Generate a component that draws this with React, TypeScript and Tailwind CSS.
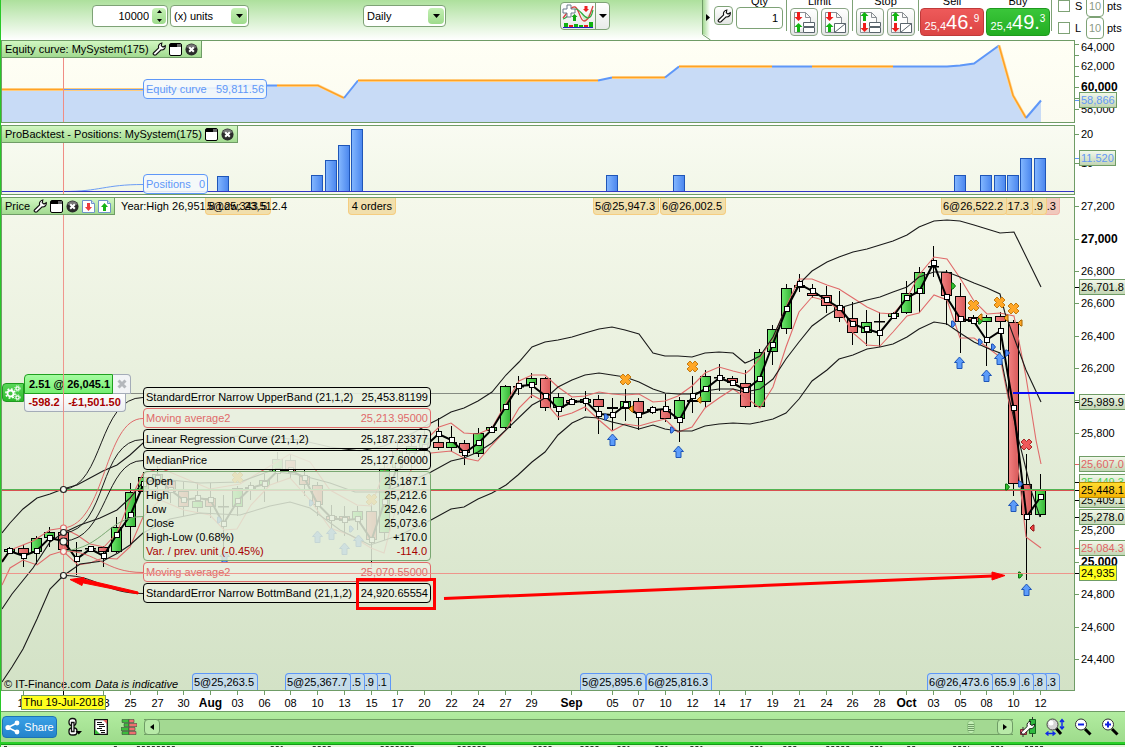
import type { ReactNode } from "react";

type Frame = { x: number; y: number; w: number; h: number };
type Dir = "up" | "down";
type Candle = [
  high: number,
  top: number,
  bottom: number,
  low: number,
  dir: Dir,
  median: number,
];
type AxisTick = { y: number; label?: string; bold?: boolean; bare?: boolean };
type AxisTag = { y: number; label: string; tone: keyof typeof TAG_TONES };
type OrderTag = { x: number; w: number; label: string; tone?: "loss" };

const EQUITY: Frame = { x: 2, y: 41, w: 1072, h: 81 };
const POSITIONS: Frame = { x: 2, y: 126, w: 1072, h: 68 };
const PRICE: Frame = { x: 2, y: 198, w: 1072, h: 492 };

const CURSOR_X = 63.5;

const barX = (i: number) => Math.floor(9.8 + 13.384 * i) + 0.5;
const left = (f: Frame, x: number) => `${((x - f.x) / f.w) * 100}%`;
const top = (f: Frame, y: number) => `${((y - f.y) / f.h) * 100}%`;
const viewBox = (f: Frame) => `${f.x} ${f.y} ${f.w} ${f.h}`;

// the axis column spans the panel's borders too
const axisTop = (f: Frame, y: number) => `${((y + 1 - f.y) / (f.h + 2)) * 100}%`;

const TAG_TONES = {
  black: "bg-linear-to-b from-[#f2f8ea] to-[#c3d5b4] border-[#6f9c66] text-black",
  red: "bg-linear-to-b from-[#f2f8ea] to-[#c3d5b4] border-[#6f9c66] text-[#e06464]",
  green:
    "bg-linear-to-b from-[#f2f8ea] to-[#c3d5b4] border-[#6f9c66] text-[#4fd04f]",
  blue: "bg-linear-to-b from-[#f2f8ea] to-[#c3d5b4] border-[#6f9c66] text-[#6398f5]",
  last: "bg-linear-to-b from-[#ffdc2e] to-[#f5b400] border-[#b88a00] text-black",
  cursor: "bg-[#ffff1e] border-[#6f9c66] text-black",
};

const CANDLES: Candle[] = [
  [547, 549, 552, 554, "up", 551],
  [545, 548, 554, 567, "down", 556],
  [536, 538, 552, 564, "up", 551],
  [527, 532, 538, 547, "up", 538],
  [528, 532, 550, 555, "down", 541],
  [542, 550, 551, 575, "up", 559],
  [547, 548, 549, 551, "up", 549],
  [546, 547, 552, 567, "down", 556],
  [517, 527, 552, 553, "up", 535],
  [483, 492, 527, 544, "up", 515],
  [472, 477, 492, 500, "up", 484],
  [466, 474, 482, 495, "up", 478],
  [478, 481, 492, 503, "down", 490],
  [482, 491, 507, 516, "down", 500],
  [483, 501, 508, 512, "up", 498],
  [483, 498, 507, 518, "down", 500],
  [495, 506, 507, 560, "down", 524],
  [486, 488, 507, 516, "up", 501],
  [482, 487, 489, 500, "up", 488],
  [474, 480, 486, 502, "up", 484],
  [452, 459, 472, 482, "up", 471],
  [454, 460, 472, 478, "down", 470],
  [470, 476, 485, 496, "down", 478],
  [482, 485, 505, 516, "down", 504],
  [505, 516, 520, 530, "down", 518],
  [506, 516, 521, 536, "down", 520],
  [506, 511, 520, 530, "up", 519],
  [505, 511, 540, 567, "down", 540],
  [462, 468, 533, 540, "up", 502],
  [440, 450, 468, 480, "up", 466],
  [436, 446, 454, 470, "up", 455],
  [430, 438, 448, 460, "up", 447],
  [418, 442, 448, 450, "down", 434],
  [426, 442, 448, 452, "up", 440],
  [440, 443, 453, 465, "down", 453],
  [428, 433, 454, 457, "up", 443],
  [426, 427, 431, 433, "up", 430],
  [385, 386, 428, 429, "up", 407],
  [376, 386, 387, 395, "up", 386],
  [373, 378, 385, 398, "up", 385],
  [377, 378, 408, 411, "down", 396],
  [393, 397, 408, 420, "up", 409],
  [398, 400, 403, 405, "down", 402],
  [391, 399, 403, 411, "up", 401],
  [395, 399, 407, 434, "down", 414],
  [398, 407, 409, 430, "down", 415],
  [389, 401, 409, 421, "up", 405],
  [398, 401, 413, 430, "down", 415],
  [406, 409, 411, 414, "up", 410],
  [394, 409, 419, 422, "down", 409],
  [397, 400, 419, 442, "up", 420],
  [376, 400, 402, 413, "down", 396],
  [370, 376, 402, 407, "up", 389],
  [364, 377, 378, 391, "up", 378],
  [376, 378, 383, 386, "down", 383],
  [370, 383, 407, 408, "down", 390],
  [349, 352, 407, 408, "up", 379],
  [325, 329, 352, 365, "up", 345],
  [284, 288, 329, 334, "up", 309],
  [274, 285, 288, 292, "up", 284],
  [284, 293, 296, 298, "down", 291],
  [286, 295, 306, 313, "down", 300],
  [291, 307, 318, 322, "down", 308],
  [302, 318, 333, 345, "down", 324],
  [310, 322, 333, 346, "up", 329],
  [312, 321, 322, 347, "up", 333],
  [312, 313, 317, 318, "up", 316],
  [281, 293, 313, 314, "up", 298],
  [267, 272, 294, 313, "up", 291],
  [246, 266, 267, 277, "up", 263],
  [270, 272, 296, 325, "down", 297],
  [283, 296, 322, 353, "down", 319],
  [315, 317, 322, 324, "down", 321],
  [315, 317, 322, 366, "up", 340],
  [312, 316, 322, 350, "down", 331],
  [320, 322, 484, 496, "down", 408],
  [454, 484, 515, 580, "down", 517],
  [474, 490, 515, 517, "up", 497],
];

const UPPER_BAND =
  "2,533 10,523 23,509 37,498 50,494 63,489 77,485 90,478 103,471 117,465 130,455 143,443 160,440 184,437 210,438 240,436 270,437 300,440 330,447 360,451 384,446 411,434 431,423 439,419 451,412 464,408 478,401 492,392 506,375 519,362 532,347 545,342 558,340 572,337 585,333 599,329 612,327 625,330 639,334 653,353 665,356 678,356 692,357 705,353 719,352 733,353 745,363 750,361 760,356 773,337 786,308 799,284 812,271 827,262 839,257 853,252 867,249 880,245 893,241 907,235 919,227 934,221 947,220 960,221 974,225 987,229 1000,233 1014,232 1041,287";
const MID_BAND =
  "2,609 12,594 33,568 50,542 63,533 80,525 100,518 117,510 130,498 143,482 170,480 200,483 240,482 270,471 300,475 330,483 355,492 384,492 411,481 431,472 451,461 464,458 478,452 492,443 508,428 532,405 547,397 558,387 572,380 585,375 599,373 612,375 625,377 639,382 653,389 665,393 678,394 692,394 705,391 719,389 733,389 745,392 760,389 773,379 786,359 799,342 812,326 827,315 839,308 853,304 867,300 880,297 893,292 907,287 919,277 934,272 947,272 960,277 974,283 987,288 1000,294 1005,313 1026,370 1041,402";
const LOWER_BAND =
  "2,682 12,667 23,649 37,619 50,589 63,576 80,564 103,561 118,553 130,545 143,533 170,519 200,513 240,515 270,506 290,502 310,508 340,530 370,545 400,535 431,520 451,509 464,507 478,499 492,493 506,485 518,475 532,462 545,452 558,435 572,423 585,417 599,418 612,422 625,425 639,429 653,425 665,429 678,431 692,431 705,426 719,424 733,423 750,424 760,422 773,419 786,413 799,399 812,381 827,370 839,359 853,355 867,349 880,347 893,344 907,337 919,329 934,322 947,324 960,333 974,342 987,348 1000,353 1008,393 1018,437 1032,493 1040,517";
const UPPER_MA =
  "2,560 13,549 33,541 50,530 63,528 77,535 90,544 104,547 117,533 130,500 143,474 160,468 184,478 210,489 240,484 270,466 290,454 310,462 330,490 357,505 371,506 384,472 398,448 411,440 431,435 439,427 451,423 464,433 478,434 492,428 506,403 519,381 532,375 545,375 558,387 572,397 585,396 599,392 612,394 625,395 639,394 653,402 665,401 678,396 692,386 705,373 719,367 733,371 745,374 750,370 760,358 773,338 786,307 799,279 812,279 827,285 839,289 853,298 867,307 880,313 893,314 907,298 919,275 934,257 947,259 960,278 974,301 987,314 1000,313 1014,316 1026,377 1036,440 1041,464";
const LOWER_MA =
  "2,585 10,568 23,560 37,565 50,555 63,551 78,565 90,563 103,558 117,559 130,547 143,517 160,500 184,510 210,515 224,530 237,529 251,505 270,485 290,478 310,500 330,528 350,535 371,548 384,553 398,500 411,470 431,453 451,451 464,458 478,461 492,445 506,430 519,408 532,395 545,402 558,417 572,413 585,407 599,420 612,431 625,424 639,426 653,422 665,419 678,432 692,427 705,408 719,398 733,389 745,397 760,408 773,387 786,347 799,312 812,297 827,301 839,310 853,333 867,345 880,346 893,332 907,316 919,313 934,295 947,300 960,338 974,338 987,347 1000,357 1013,423 1026,537 1041,548";

const BUY_ARROWS = [
  [224, 557],
  [317, 537],
  [331, 534],
  [344, 549],
  [358, 541],
  [612, 440],
  [678, 452],
  [959, 363],
  [986, 376],
  [999, 359],
  [1013, 506],
  [1026, 590],
];
const CLOSE_CROSSES: [number, number, string, string][] = [
  [237, 477, "#ffa726", "#c47a10"],
  [371, 499, "#ffa726", "#c47a10"],
  [625, 379, "#ffa726", "#c47a10"],
  [692, 366, "#ffa726", "#c47a10"],
  [973, 305, "#ffa726", "#c47a10"],
  [999, 302, "#ffa726", "#c47a10"],
  [1013, 308, "#ffa726", "#c47a10"],
  [1026, 444, "#f05a5a", "#a82828"],
];
const RIGHT_FILLS: [number, number, string, string][] = [
  [219, 520, "#4f8ff5", "#1f4fb4"],
  [311, 503, "#4f8ff5", "#1f4fb4"],
  [351, 529, "#4f8ff5", "#1f4fb4"],
  [606, 417, "#4f8ff5", "#1f4fb4"],
  [672, 430, "#4f8ff5", "#1f4fb4"],
  [953, 324, "#4f8ff5", "#1f4fb4"],
  [980, 342, "#4f8ff5", "#1f4fb4"],
  [993, 347, "#4f8ff5", "#1f4fb4"],
  [1007, 353, "#4f8ff5", "#1f4fb4"],
  [1020, 484, "#4f8ff5", "#1f4fb4"],
  [953, 286, "#2fc02f", "#0b700b"],
  [980, 321, "#2fc02f", "#0b700b"],
  [1007, 487, "#2fc02f", "#0b700b"],
  [1020, 575, "#2fc02f", "#0b700b"],
];
const LEFT_FILLS: [number, number, string, string][] = [
  [631, 409, "#ffa726", "#a86400"],
  [699, 400, "#ffa726", "#a86400"],
  [980, 317, "#ffa726", "#a86400"],
  [1006, 318, "#ffa726", "#a86400"],
  [1020, 323, "#ffa726", "#a86400"],
  [1032, 528, "#f04040", "#901818"],
];

const EQUITY_SEGMENTS: [string, boolean][] = [
  ["2,89.5 144,89.5", true],
  ["144,89.5 215,88 230,85.5 277,85.5", false],
  ["277,85.5 318,85.5 344,98", true],
  ["344,98 358,80.5", false],
  ["358,80.5 598,80.5", true],
  ["598,80.5 612,77.5", false],
  ["612,77.5 665,77.5", true],
  ["665,77.5 679,66.5", false],
  ["679,66.5 772,66.5", true],
  ["772,66.5 812,66.5", false],
  ["812,66.5 893,66.5", true],
  ["893,66.5 947,66.5 960,65.5 974,63.5 999,45.5", false],
  ["999,45.5 1013,95.5 1026,118", true],
  ["1026,118 1041,100.5", false],
];

const POSITION_BARS: [number, number][] = [
  [16, 176],
  [23, 175],
  [24, 160],
  [25, 145],
  [26, 129],
  [45, 175],
  [50, 175],
  [71, 175],
  [73, 175],
  [74, 175],
  [75, 175],
  [76, 158],
  [77, 158],
];

const DATE_LABELS: [number, string][] = [
  [1, "18"], [7, "23"], [9, "25"], [11, "27"], [13, "30"], [15, "Aug"],
  [17, "03"], [19, "06"], [21, "08"], [23, "10"], [25, "13"], [27, "15"],
  [29, "17"], [31, "20"], [33, "22"], [35, "24"], [37, "27"], [39, "29"],
  [42, "Sep"], [45, "05"], [47, "07"], [49, "10"], [51, "12"], [53, "14"],
  [55, "17"], [57, "19"], [59, "21"], [61, "24"], [63, "26"], [65, "28"],
  [67, "Oct"], [69, "03"], [71, "05"], [73, "08"], [75, "10"], [77, "12"],
];

const EQUITY_TICKS: AxisTick[] = [
  { y: 44 },
  { y: 47, label: "64,000", bare: true },
  { y: 55 },
  { y: 66, label: "62,000" },
  { y: 76 },
  { y: 87, label: "60,000", bold: true },
  { y: 98 },
  { y: 109, label: "58,000" },
];
const POSITION_TICKS: AxisTick[] = [
  { y: 134, label: "20" },
  { y: 163, label: "10" },
];
const PRICE_TICKS: AxisTick[] = [
  { y: 206, label: "27,200" },
  { y: 239, label: "27,000", bold: true },
  { y: 271, label: "26,800" },
  { y: 303, label: "26,600" },
  { y: 336, label: "26,400" },
  { y: 368, label: "26,200" },
  { y: 400 },
  { y: 433, label: "25,800" },
  { y: 530, label: "25,200" },
  { y: 562, label: "25,000", bold: true },
  { y: 594, label: "24,800" },
  { y: 627, label: "24,600" },
  { y: 659, label: "24,400" },
];
const PRICE_TAGS: AxisTag[] = [
  { y: 287, label: "26,701.8", tone: "black" },
  { y: 402, label: "25,989.9", tone: "black" },
  { y: 464, label: "25,607.0", tone: "red" },
  { y: 482, label: "25,449.3", tone: "green" },
  { y: 500, label: "25,409.1", tone: "black" },
  { y: 517, label: "25,278.0", tone: "black" },
  { y: 490, label: "25,448.1", tone: "last" },
  { y: 548, label: "25,084.3", tone: "red" },
  { y: 573, label: "24,935", tone: "cursor" },
];

const EXIT_TAGS: OrderTag[] = [
  { x: 205, w: 66, label: "5@25,343.5" },
  { x: 348, w: 48, label: "4 orders" },
  { x: 593, w: 66, label: "5@25,947.3" },
  { x: 660, w: 66, label: "6@26,002.5" },
  { x: 1043, w: 17, label: ".3", tone: "loss" },
  { x: 1030, w: 17, label: ".9" },
  { x: 1004, w: 29, label: "17.3" },
  { x: 941, w: 66, label: "6@26,522.2" },
];
const ENTRY_TAGS: OrderTag[] = [
  { x: 192, w: 66, label: "5@25,263.5" },
  { x: 374, w: 17, label: ".1" },
  { x: 361, w: 17, label: ".9" },
  { x: 348, w: 17, label: ".5" },
  { x: 285, w: 66, label: "5@25,367.7" },
  { x: 580, w: 66, label: "5@25,895.6" },
  { x: 646, w: 66, label: "6@25,816.3" },
  { x: 1043, w: 17, label: ".3" },
  { x: 1030, w: 17, label: ".8" },
  { x: 1017, w: 17, label: ".6" },
  { x: 990, w: 30, label: "65.9" },
  { x: 927, w: 66, label: "6@26,473.6" },
];

const READINGS = [
  ["Open", "25,187.1"],
  ["High", "25,212.6"],
  ["Low", "25,042.6"],
  ["Close", "25,073.6"],
  ["High-Low (0.68%)", "+170.0"],
  ["Var. / prev. unit (-0.45%)", "-114.0"],
];

const WRENCH =
  "M1.6 12.6 7.6 6.8C6.8 4 8.4 1.6 11.2 1.2L10.6 4.4l2 1.4 2.6-1.6c.4 3.2-2 5.4-4.8 4.8L4.6 14.6c-1.8 1-4-.4-3-2z";

const WrenchIcon = () => (
  <svg viewBox="0 0 16 16" className="size-[14px]">
    <path d={WRENCH} fill="#fff" stroke="#111" strokeWidth="1.3" />
  </svg>
);

const WindowIcon = () => (
  <svg viewBox="0 0 13 13" className="size-[13px]">
    <rect x="0.5" y="0.5" width="12" height="12" rx="1.5" fill="#fff" stroke="#000" />
    <path d="M1 1h11v3H1z" fill="#000" />
    <path d="M8 1h4v3H8z" fill="#666" />
  </svg>
);

const CloseIcon = () => (
  <svg viewBox="0 0 14 14" className="size-[13px]">
    <circle cx="7" cy="7" r="6.500" fill="#2b2b2b" />
    <path d="M1.500 5A6 6 0 0 1 12.500 5z" fill="#777" />
    <path d="m4.500 4.500 5 5m0-5-5 5" stroke="#fff" strokeWidth="2.200" />
  </svg>
);

const PageArrowIcon = ({ up }: { up?: boolean }) => (
  <svg viewBox="0 0 13 13" className="size-[13px]">
    <path d="M.5.5h9l3 3v9H.5z" fill="#fff" stroke="#6f94c8" />
    <path d="M9.500.5v3h3" fill="#cfe0f5" stroke="#6f94c8" />
    <path
      d={up ? "m6.500 3 3.500 4H8v4H5V7H3z" : "m6.500 11 3.500-4H8V3H5v4H3z"}
      fill={up ? "#16b416" : "#ee3a3a"}
    />
  </svg>
);

const OrderIcon = ({ stop, slash }: { stop?: boolean; slash?: boolean }) => (
  <svg viewBox="0 0 24 24" className="size-6">
    <path d="M2.500 22.500v-20h11l5 5v6M13.500 2.500v5h5" fill="#fdfdfd" stroke="#8a8f94" />
    <path d="M2.500 22.500h9" stroke="#8a8f94" />
    {slash ? (
      <path d="M11.500 13.500h11v9h-11zm0 9 11-9" fill="#fff" stroke="#59646c" />
    ) : (
      <path d="M11.500 12.500h11v4h-11zm0 5h11v5h-11z" fill="#fff" stroke="#59646c" />
    )}
    <g fill={stop ? "#12b412" : "#ee1c1c"}>
      <path d={stop ? "m6.500 2 4 4H8v5H5V6H2.500z" : "m6.500 11 4-4H8V2H5v5H2.500z"} />
    </g>
    <g fill={stop ? "#ee1c1c" : "#12b412"}>
      <path d={stop ? "m6.500 22 4-4H8v-5H5v5H2.500z" : "m6.500 13 4 4H8v5H5v-5H2.500z"} />
    </g>
  </svg>
);

const IndicatorIcon = () => (
  <svg viewBox="0 0 32 24" className="h-6 w-8">
    <path d="M15 6c4 0 5 8 8 11 4-1 6-6 8-13-3 4-5 9-8 8S19 6 15 6z" fill="#cdeec8" />
    <path
      d="M1 14C6 8 9 2 13 3s5 14 9 14 6-6 9-15"
      fill="none"
      stroke="#d84040"
      strokeWidth="1.300"
    />
    <path
      d="M1 15C6 14 10 5 14 5s8 9 12 9 4-5 5-8"
      fill="none"
      stroke="#2aa83a"
      strokeWidth="1.200"
    />
    <path d="M5 1h4v4h4v4H9v4H5V9H1V5h4z" fill="#fff" stroke="#6a7a8c" />
    <path d="m24 8 3-3h-1.500V2h-3v3H21z" fill="#ee2020" />
    <path d="m12.500 10 3 3H14v4h-3v-4H9.500z" fill="#12a812" />
    <path d="M2 19h4v4H2zM12 20h4v3h-4zM17 21h4v2h-4zM27 18h4v5h-4z" fill="#10b010" />
    <path d="M7 21h4v2H7zM22 21h4v2h-4z" fill="#e02020" />
    <path d="M1 23.500h30" stroke="#2020c0" />
  </svg>
);

const GearsIcon = () => (
  <svg viewBox="0 0 16 16" className="size-4" fill="none" stroke="#fff">
    <circle cx="5.500" cy="8.500" r="3" strokeWidth="1.800" />
    <circle cx="5.500" cy="8.500" r="4.600" strokeWidth="1.600" strokeDasharray="1.800 1.800" />
    <circle cx="12.500" cy="3.500" r="1.600" strokeWidth="1.200" />
    <circle cx="12.500" cy="3.500" r="2.700" strokeDasharray="1.100 1.100" />
    <circle cx="12.500" cy="12.500" r="1.600" strokeWidth="1.200" />
    <circle cx="12.500" cy="12.500" r="2.700" strokeDasharray="1.100 1.100" />
  </svg>
);

const Magnifier = ({ sign }: { sign: "+" | "-" }) => (
  <svg viewBox="0 0 18 18" className="size-[18px]">
    <path d="m11 11 5.500 5.500" stroke="#000" strokeWidth="3" />
    <circle cx="7" cy="6.500" r="5.500" fill="#fff" stroke="#333" />
    <path
      d={sign === "+" ? "M4 6.500h6M7 3.500v6" : "M4 6.500h6"}
      stroke="#1020e0"
      strokeWidth="2"
    />
  </svg>
);

const ToolButton = ({ label, children }: { label: string; children: ReactNode }) => (
  <button
    type="button"
    aria-label={label}
    className="flex size-7 shrink-0 items-center justify-center rounded border border-[#8aa585] bg-linear-to-b from-white to-[#e4e6e4]"
  >
    {children}
  </button>
);

const DropDown = ({
  label,
  value,
  className,
}: {
  label: string;
  value: string;
  className: string;
}) => (
  <label className={`relative block h-[22px] shrink-0 ${className}`}>
    <select
      aria-label={label}
      className="block size-full appearance-none rounded border border-[#7ea276] bg-white pl-[3px] text-[11px]"
    >
      <option>{value}</option>
    </select>
    <span className="pointer-events-none absolute inset-y-[3px] right-[2px] flex w-4 items-center justify-center rounded-sm bg-linear-to-b from-[#c4f0b4] to-[#9edb8c]">
      <svg viewBox="0 0 7 4" className="h-1 w-[7px]">
        <path d="M0 0h7L3.500 4z" />
      </svg>
    </span>
  </label>
);

const Separator = () => <div className="h-[31px] w-px shrink-0 bg-[#7ea276]" />;

const OrderGroup = ({ name, stop }: { name: string; stop?: boolean }) => (
  <div className="w-[65px] shrink-0">
    <div className="-mt-[5px] mb-px text-center text-[11px] leading-3">{name}</div>
    <div className="flex justify-center gap-[3px]">
      <ToolButton label={`${name} order`}>
        <OrderIcon stop={stop} />
      </ToolButton>
      <ToolButton label={`${name} order at price`}>
        <OrderIcon stop={stop} slash />
      </ToolButton>
    </div>
  </div>
);

const QuoteButton = ({
  name,
  big,
  small,
  className,
}: {
  name: string;
  big: string;
  small: string;
  className: string;
}) => (
  <div className="w-[66px] shrink-0">
    <div className="-mt-[5px] mb-px text-center text-[11px] leading-3">{name}</div>
    <button
      type="button"
      aria-label={name}
      className={`mx-auto flex h-7 w-16 items-end justify-center rounded border pb-[3px] leading-none text-white ${className}`}
    >
      <span className="text-[11px] leading-3">25,4</span>
      <span className="text-[20px] leading-5">{big}.</span>
      <span className="self-start pt-1 text-[10px] leading-3">{small}</span>
    </button>
  </div>
);

const StopLimitRow = ({ name }: { name: string }) => (
  <div className="flex h-[22px] items-center gap-1">
    <label className="flex items-center gap-[5px]">
      <input
        type="checkbox"
        className="size-3 appearance-none border border-[#7ea276] bg-white"
      />
      <span className="w-[7px]">{name}</span>
    </label>
    <input
      aria-label={`${name} distance`}
      defaultValue="10"
      className="h-[22px] w-[18px] rounded border border-[#7ea276] bg-white text-center text-[11px] text-[#8a9a86]"
    />
    <span className="-ml-px">pts</span>
  </div>
);

const TopToolbar = () => (
  <header className="flex h-10 shrink-0 items-start overflow-hidden bg-linear-to-b from-[#ade09c] to-white pl-[91px]">
    <div className="relative mt-[5px] mr-0.5 h-[22px] w-[76px] shrink-0">
      <input
        aria-label="Units in history"
        defaultValue="10000"
        className="block size-full rounded border border-[#7ea276] bg-white pr-[18px] text-right text-[11px]"
      />
      <span className="absolute inset-y-[3px] right-[2px] flex w-[14px] flex-col items-center justify-between rounded-sm bg-linear-to-b from-[#c4f0b4] to-[#9edb8c] py-[2px]">
        <svg viewBox="0 0 5 3" className="h-[3px] w-[5px]">
          <path d="M0 3h5L2.500 0z" />
        </svg>
        <svg viewBox="0 0 5 3" className="h-[3px] w-[5px]">
          <path d="M0 0h5L2.500 3z" />
        </svg>
      </span>
    </div>
    <div className="mt-[5px] shrink-0">
      <DropDown label="Range" value="(x) units" className="w-[79px]" />
    </div>
    <div className="mt-[5px] ml-[114px] shrink-0">
      <DropDown label="Timeframe" value="Daily" className="w-[83px]" />
    </div>
    <div className="mt-[2px] ml-[114px] flex h-7 w-[50px] shrink-0 rounded border border-[#7ea276] bg-linear-to-b from-white to-[#e8ebe8]">
      <button type="button" aria-label="Add indicator" className="flex flex-1 items-center justify-center">
        <IndicatorIcon />
      </button>
      <button
        type="button"
        aria-label="Indicator list"
        className="flex w-[14px] items-center justify-center border-l border-[#7ea276]"
      >
        <svg viewBox="0 0 8 4" className="h-1 w-2">
          <path d="M0 0h8L4 4z" />
        </svg>
      </button>
    </div>
    <div className="relative ml-auto flex h-10 w-[423px] shrink-0 items-start text-[11px]">
      <svg viewBox="0 0 423 40" preserveAspectRatio="none" className="absolute inset-0 size-full">
        <defs>
          <linearGradient id="fold">
            <stop offset="0" stopColor="#a5da94" />
            <stop offset="1" stopColor="#fff" />
          </linearGradient>
        </defs>
        <path d="M.5 0v34.500l8 5.500H423V0z" fill="#fff" />
        <path d="M1 0h7v38l-7-4z" fill="url(#fold)" />
        <path d="M.5 0v34.500l8 5.500" fill="none" stroke="#6f9c66" />
        <path d="m4 14 4 3.500L4 21z" />
      </svg>
      <button
        type="button"
        aria-label="Trading settings"
        className="relative mt-[6px] ml-3 flex size-[19px] shrink-0 items-center justify-center rounded border border-[#7ea276] bg-linear-to-b from-white to-[#e4e6e4]"
      >
        <WrenchIcon />
      </button>
      <label className="relative ml-[3px] w-[47px] shrink-0 text-center">
        <span className="-mt-[5px] block leading-3">Qty</span>
        <input
          defaultValue="1"
          className="block h-[22px] w-full rounded border border-[#7ea276] bg-white pr-1 text-right text-[11px]"
        />
      </label>
      <div className="relative ml-[3px] flex">
        <Separator />
        <OrderGroup name="Limit" />
        <Separator />
        <OrderGroup name="Stop" stop />
        <Separator />
        <QuoteButton
          name="Sell"
          big="46"
          small="9"
          className="border-[#c03a3a] bg-linear-to-b from-[#ee5a5a] to-[#dc4444]"
        />
        <QuoteButton
          name="Buy"
          big="49"
          small="3"
          className="border-[#1f9a1f] bg-linear-to-b from-[#3ac63a] to-[#22ae22]"
        />
        <Separator />
      </div>
      <div className="relative -mt-[5px] ml-[6px] shrink-0">
        <StopLimitRow name="S" />
        <StopLimitRow name="L" />
      </div>
    </div>
  </header>
);

const PanelTitle = ({ title, children }: { title: string; children: ReactNode }) => (
  <div className="relative inline-flex h-[17px] items-center gap-[3px] border-r border-b border-[#6f9c66] bg-linear-to-b from-[#d2f7c2] to-[#a2da90] pr-[3px] pl-[3px] align-top">
    <h2 className="text-[11px]">{title}</h2>
    {children}
  </div>
);

const Axis = ({
  frame,
  ticks,
  tags,
}: {
  frame: Frame;
  ticks: AxisTick[];
  tags: AxisTag[];
}) => (
  <div className="relative w-[50px] shrink-0">
    {ticks.map((t) => (
      <div
        key={t.y}
        className="absolute left-0 flex h-0 items-center gap-[2px]"
        style={{ top: axisTop(frame, t.y) }}
      >
        <span className={`h-px w-1 ${t.bare ? "" : "bg-[#6f9c66]"}`} />
        <span className={t.bold ? "text-xs font-bold" : "text-[11px]"}>{t.label}</span>
      </div>
    ))}
    {tags.map((t) => (
      <div
        key={t.label}
        className="absolute left-0 flex h-0 items-center"
        style={{ top: axisTop(frame, t.y) }}
      >
        <span
          className={`h-px w-1 ${t.tone === "blue" ? "bg-[#5e97f8]" : t.tone === "red" ? "bg-[#e06464]" : "bg-black"}`}
        />
        <span className={`border px-px text-[11px] leading-[14px] ${TAG_TONES[t.tone]}`}>
          {t.label}
        </span>
      </div>
    ))}
  </div>
);

const EquityPanel = () => {
  const outline = EQUITY_SEGMENTS.map(([p]) => p).join(" ");
  return (
    <section className="flex h-[83px] shrink-0">
      <div className="relative flex-1 border border-[#6f9c66] bg-linear-to-b from-[#fffff5] to-[#fbfbf0]">
        <svg
          viewBox={viewBox(EQUITY)}
          preserveAspectRatio="none"
          className="absolute inset-0 size-full"
        >
          <polygon points={`2,122 ${outline} 1041,122`} fill="#c8dbf6" />
          {EQUITY_SEGMENTS.map(([points, flat]) => (
            <g key={points} fill="none">
              {flat && <polyline points={points} stroke="#ffd99a" strokeWidth="3" />}
              <polyline
                points={points}
                stroke={flat ? "#ffa226" : "#5e97f8"}
                strokeWidth={flat ? 1.6 : 2}
              />
            </g>
          ))}
          <path d="M63.500 89.500H143" stroke="#5e97f8" />
          <path d="M63.500 58V122" stroke="#f08c84" />
        </svg>
        <PanelTitle title="Equity curve: MySystem(175)">
          <WrenchIcon />
          <WindowIcon />
          <CloseIcon />
        </PanelTitle>
        <div
          className="absolute flex h-5 w-[124px] items-center justify-between rounded border border-[#5e97f8] bg-[#f4f8fb]/90 px-[2px] text-[11px] text-[#5e97f8]"
          style={{ left: left(EQUITY, 143), top: top(EQUITY, 79) }}
        >
          <span>Equity curve</span>
          <span>59,811.56</span>
        </div>
      </div>
      <Axis
        frame={EQUITY}
        ticks={EQUITY_TICKS}
        tags={[{ y: 100, label: "58,866", tone: "blue" }]}
      />
    </section>
  );
};

const PositionsPanel = () => (
  <section className="mt-0.5 flex h-[70px] shrink-0">
    <div className="relative flex-1 border border-[#6f9c66] bg-linear-to-b from-[#f9fbf2] to-[#f2f7e8]">
      <svg
        viewBox={viewBox(POSITIONS)}
        preserveAspectRatio="none"
        className="absolute inset-0 size-full"
      >
        <defs>
          <linearGradient id="bar">
            <stop offset="0" stopColor="#84b8ff" />
            <stop offset="1" stopColor="#4a86ee" />
          </linearGradient>
        </defs>
        {POSITION_BARS.map(([i, y]) => (
          <rect
            key={i}
            x={barX(i) - 6}
            y={y + 0.5}
            width="11"
            height={191 - y}
            fill="url(#bar)"
            stroke="#1f56b8"
          />
        ))}
        <path d="M63.500 191.500C100 191.500 105 184.500 143 184.500" fill="none" stroke="#6c9df5" />
        <path d="M2 191.500H1074" stroke="#3236c4" />
        <path d="M63.500 143V194" stroke="#f08c84" />
      </svg>
      <PanelTitle title="ProBacktest - Positions: MySystem(175)">
        <WindowIcon />
        <CloseIcon />
      </PanelTitle>
      <div
        className="absolute flex h-5 w-[65px] items-center justify-between rounded border border-[#5e97f8] bg-[#f4f8fb]/90 px-[2px] text-[11px] text-[#5e97f8]"
        style={{ left: left(POSITIONS, 143), top: top(POSITIONS, 174) }}
      >
        <span>Positions</span>
        <span>0</span>
      </div>
    </div>
    <Axis
      frame={POSITIONS}
      ticks={POSITION_TICKS}
      tags={[{ y: 158, label: "11.520", tone: "blue" }]}
    />
  </section>
);

const PriceDrawing = () => (
  <svg
    viewBox={viewBox(PRICE)}
    preserveAspectRatio="none"
    className="absolute inset-0 size-full"
  >
    <defs>
      <linearGradient id="up">
        <stop offset="0" stopColor="#6eea6e" />
        <stop offset="1" stopColor="#35b435" />
      </linearGradient>
      <linearGradient id="down">
        <stop offset="0" stopColor="#f28080" />
        <stop offset="1" stopColor="#d85a5a" />
      </linearGradient>
    </defs>
    <path d="M2 393.500H1074" stroke="#858b82" />
    {CANDLES.map(([high, body, bottom, low, dir], i) => (
      <g key={i} stroke="#000">
        <path d={`M${barX(i)} ${high}V${low}`} />
        <rect
          x={barX(i) - 5}
          y={body + 0.5}
          width="10"
          height={Math.max(bottom - body - 1, 0.5)}
          fill={dir === "up" ? "url(#up)" : "url(#down)"}
        />
      </g>
    ))}
    <g fill="none" stroke="#e06a6a" strokeWidth="1.100">
      <polyline points={UPPER_MA} />
      <polyline points={LOWER_MA} />
    </g>
    <g fill="none" stroke="#1a1a1a" strokeWidth="1.100">
      <polyline points={UPPER_BAND} />
      <polyline points={MID_BAND} />
      <polyline points={LOWER_BAND} />
    </g>
    <polyline
      points={`2,562 ${CANDLES.map((c, i) => `${barX(i)},${c[5]}`).join(" ")}`}
      fill="none"
      stroke="#000"
      strokeWidth="2"
    />
    {CANDLES.map((c, i) => (
      <rect
        key={i}
        x={barX(i) - 2}
        y={c[5] - 2.5}
        width="5"
        height="5"
        fill="#fff"
        stroke="#000"
      />
    ))}
    <path d="M2 489.500H1074" stroke="#52b452" />
    <path d="M2 490.500H1074" stroke="#d85050" />
    <path d="M1013 393H1074" stroke="#0a0af5" strokeWidth="2" />
    {BUY_ARROWS.map(([x, y]) => (
      <path
        key={x}
        d={`M${x + 0.5} ${y - 6}l5 5.500h-2.500v6h-5v-6h-2.500z`}
        fill="#5c9cfa"
        stroke="#1f56b8"
      />
    ))}
    {CLOSE_CROSSES.map(([x, y, fill, stroke]) => (
      <path
        key={x}
        d={`M${x + 0.5} ${y - 2.5}l2.500-2.500 3 3-2.500 2.500 2.500 2.500-3 3-2.500-2.500-2.500 2.500-3-3 2.500-2.500-2.500-2.500 3-3z`}
        fill={fill}
        stroke={stroke}
        strokeLinejoin="round"
      />
    ))}
    {RIGHT_FILLS.map(([x, y, fill, stroke]) => (
      <path
        key={`${x}-${y}`}
        d={`M${x - 1.5} ${y - 3}h1.500l2.500 3-2.500 3h-1.500z`}
        fill={fill}
        stroke={stroke}
      />
    ))}
    {LEFT_FILLS.map(([x, y, fill, stroke]) => (
      <path
        key={`${x}-${y}`}
        d={`M${x + 2} ${y - 3}h-1l-3 3 3 3h1z`}
        fill={fill}
        stroke={stroke}
      />
    ))}
    <g fill="none" stroke="#1a1a1a">
      <path d="M63.500 489.500C104 486 98 397.500 143 397.500" />
      <path d="M63.500 533C108 530 98 439.500 143 439.500" />
      <path d="M63.500 541C108 540 104 460.500 143 460.500" />
      <path d="M63.500 575.500C98 575.500 104 593.500 143 593.500" />
      <path d="M63.500 528C106 524 104 418.500 143 418.500" stroke="#e06a6a" />
      <path d="M63.500 551C98 551 104 572.500 143 572.500" stroke="#e06a6a" />
      <path d="M63.500 551C104 548 108 516.500 143 516.500" stroke="#7aa872" />
    </g>
  </svg>
);

const Callout = ({
  label,
  value,
  red,
}: {
  label: string;
  value: string;
  red?: boolean;
}) => (
  <div
    className={`flex h-5 items-center justify-between rounded border bg-[#e9f0e0]/90 px-[2px] ${red ? "border-[#e06a6a] text-[#e06a6a]" : "border-black text-black"}`}
  >
    <span>{label}</span>
    <span>{value}</span>
  </div>
);

const Callouts = () => (
  <div
    className="absolute flex w-72 flex-col gap-px text-[11px]"
    style={{ left: left(PRICE, 143), top: top(PRICE, 387) }}
  >
    <Callout label="StandardError Narrow UpperBand (21,1,2)" value="25,453.81199" />
    <Callout label="Moving average2" value="25,213.95000" red />
    <Callout label="Linear Regression Curve (21,1,2)" value="25,187.23377" />
    <Callout label="MedianPrice" value="25,127.60000" />
    <dl className="h-[90px] rounded border border-[#7aa872] bg-[#e3ecd9]/85 px-[2px] pt-[2px] leading-[14px]">
      {READINGS.map(([name, value]) => (
        <div
          key={name}
          className={`flex justify-between pr-px ${name.startsWith("Var") ? "text-[#a80000]" : ""}`}
        >
          <dt>{name}</dt>
          <dd>{value}</dd>
        </div>
      ))}
    </dl>
    <Callout label="Moving average2" value="25,070.55000" red />
    <Callout label="StandardError Narrow BottmBand (21,1,2)" value="24,920.65554" />
  </div>
);

const PositionBadge = () => (
  <div
    className="absolute flex items-start text-[11px] font-bold"
    style={{ left: left(PRICE, 2), top: top(PRICE, 374) }}
  >
    <button
      type="button"
      aria-label="Order settings"
      className="mt-[9px] flex h-[19px] w-[22px] items-center justify-center rounded-l border border-[#1f9a1f] bg-linear-to-b from-[#5ad85a] to-[#28b828]"
    >
      <GearsIcon />
    </button>
    <div>
      <div className="flex h-5">
        <span className="flex w-[89px] items-center rounded-tl border border-[#1fa01f] bg-linear-to-b from-[#a4fca0] to-[#74ee70] pl-1">
          2.51 @ 26,045.1
        </span>
        <button
          type="button"
          aria-label="Close position"
          className="flex w-[18px] items-center justify-center rounded-tr border border-l-0 border-[#a4acb8] bg-[#f2f4f6]"
        >
          <svg viewBox="0 0 10 10" className="size-[10px]">
            <path d="m1.500 1.500 7 7m0-7-7 7" stroke="#b4b8bc" strokeWidth="3" />
          </svg>
        </button>
      </div>
      <div className="flex h-[18px] w-[102px] rounded-b border border-t-0 border-[#a4acb8] bg-linear-to-b from-white to-[#ebeef0] text-[#a80000]">
        <span className="flex w-[39px] items-center justify-center border-r border-[#a4acb8]">
          -598.2
        </span>
        <span className="flex flex-1 items-center justify-center">-£1,501.50</span>
      </div>
    </div>
  </div>
);

const OrderTags = ({ tags, entry }: { tags: OrderTag[]; entry?: boolean }) => (
  <>
    {tags.map((t) => (
      <span
        key={t.x}
        className={`absolute flex h-[17px] items-center justify-end border px-[3px] text-[11px] whitespace-nowrap ${
          entry
            ? "bottom-0 rounded-t border-b-0 border-[#5e97f8] bg-[#c4dbe8]"
            : t.tone === "loss"
              ? "top-0 rounded-b border-t-0 border-[#f2b4a8] bg-[#f0c8bc]"
              : "top-0 rounded-b border-t-0 border-[#f5cd80] bg-[#f1dfac]"
        }`}
        style={{ left: left(PRICE, t.x), width: t.w }}
      >
        {t.label}
      </span>
    ))}
  </>
);

const PricePanel = () => (
  <section className="mt-0.5 flex min-h-0 flex-1">
    <div className="relative flex-1 border border-[#6f9c66] bg-linear-to-b from-[#f5f8eb] to-[#d3e2c6]">
      <PriceDrawing />
      <OrderTags tags={EXIT_TAGS} />
      <OrderTags tags={ENTRY_TAGS} entry />
      <div className="flex items-start">
        <PanelTitle title="Price">
          <WrenchIcon />
          <WindowIcon />
          <CloseIcon />
          <PageArrowIcon />
          <PageArrowIcon up />
        </PanelTitle>
        <span className="relative ml-[6px] text-[11px] leading-4 whitespace-nowrap">
          Year:High 26,951.8 Low: 23,512.4
        </span>
      </div>
      <Callouts />
      <PositionBadge />
      <p className="absolute bottom-0 left-[2px] text-[11px] leading-3">
        © IT-Finance.com <em className="ml-px">Data is indicative</em>
      </p>
      <svg
        viewBox={viewBox(PRICE)}
        preserveAspectRatio="none"
        className="pointer-events-none absolute inset-0 size-full"
      >
        <path d={`M${CURSOR_X} 215V690M2 573.500H1074`} stroke="#f08c84" strokeOpacity="0.900" />
        <g fill="#f4f8ee" strokeWidth="1.200">
          <circle cx="63.500" cy="528" r="3" stroke="#e06a6a" />
          <circle cx="63.500" cy="551.500" r="3" stroke="#e06a6a" />
          <g stroke="#222">
            <circle cx="63.500" cy="489.500" r="3" />
            <circle cx="63.500" cy="532.500" r="3" />
            <circle cx="63.500" cy="541.500" r="3.500" />
            <circle cx="63.500" cy="575.500" r="3" />
          </g>
        </g>
        <g fill="#f00" stroke="#f00">
          <rect x="357.500" y="579.500" width="77" height="29" fill="none" strokeWidth="3" />
          <path d="m138 592-57-13.500v4l57 11.500z" />
          <path d="m70 579.500 14-2-2 8z" />
          <path d="M444 598.500 993 576" strokeWidth="3" />
          <path d="m1005 575.500-13-3.500v8z" />
        </g>
      </svg>
    </div>
    <Axis frame={PRICE} ticks={PRICE_TICKS} tags={PRICE_TAGS} />
  </section>
);

const DateAxis = () => (
  <div className="flex h-[21px] shrink-0 border-b border-[#6f9c66] bg-white">
    <div className="relative mx-px flex-1">
      {DATE_LABELS.map(([i, label]) => (
        <div
          key={i}
          className="absolute top-0 flex w-0 flex-col items-center"
          style={{ left: left(PRICE, barX(i)) }}
        >
          <span className="h-1 w-px bg-[#6f9c66]" />
          <span
            className={`leading-4 ${label.length > 2 ? "text-xs font-bold" : "text-[11px]"}`}
          >
            {label}
          </span>
        </div>
      ))}
      <div
        className="absolute top-0 flex w-0 flex-col items-center"
        style={{ left: left(PRICE, CURSOR_X) }}
      >
        <span className="h-1 w-px bg-black" />
        <span className="border border-[#6f9c66] bg-[#ffff1e] px-px text-[11px] leading-[13px] whitespace-nowrap">
          Thu 19-Jul-2018
        </span>
      </div>
    </div>
    <div className="w-[50px] shrink-0" />
  </div>
);

const BottomToolbar = () => (
  <footer className="flex h-[30px] shrink-0 items-center bg-linear-to-b from-[#b2eda0] to-[#9edb8c] pr-[6px] pl-px">
    <button
      type="button"
      className="flex h-[22px] w-[55px] items-center justify-center gap-1 rounded border border-[#1c72b4] bg-linear-to-b from-[#3aa0e6] to-[#2484cc] text-[11px] text-white"
    >
      <svg viewBox="0 0 15 15" className="size-[15px]" fill="#fff">
        <path d="M12 3 3 7.500l9 4.500" fill="none" stroke="#fff" strokeWidth="1.600" />
        <circle cx="12" cy="3" r="2.400" />
        <circle cx="3" cy="7.500" r="2.600" />
        <circle cx="12" cy="12" r="2.400" />
      </svg>
      Share
    </button>
    <button type="button" aria-label="Link windows" className="ml-[9px]">
      <svg viewBox="0 0 18 20" className="h-5 w-[18px]">
        <g fill="#fff" stroke="#111" strokeWidth="1.300">
          <rect x="3" y="1.500" width="7" height="7" rx="3" />
          <rect x="3" y="11" width="8" height="7" rx="3" />
          <path d="M5.500 5.500h2.500v9H5.500z" />
        </g>
        <path d="M9.500 14h6.500l-3.200 3.500z" />
      </svg>
    </button>
    <button type="button" aria-label="Notes" className="ml-[10px]">
      <svg viewBox="0 0 14 16" className="h-4 w-[14px]">
        <path d="M.7.7h12.600v14.600H.7z" fill="#fff" stroke="#111" strokeWidth="1.300" />
        <path d="M3 3.500h5M3 5.500h7M5 7.500h6M3 9.500h5M6 11.500h5M7 13.500h4" stroke="#111" />
        <path d="M9 1h4v4z" fill="#e06060" />
        <path d="M1 10v5h5z" fill="#3ab83a" />
      </svg>
    </button>
    <button type="button" aria-label="Order book" className="ml-[13px]">
      <svg viewBox="0 0 16 16" className="size-4">
        <g stroke="#333" strokeWidth="0.500">
          <path d="M1 .5h7v3H1zM3 4.500h5v3H3zM0 8.500h8v3H0zM1 12.500h7v3H1z" fill="#3cbc3c" />
          <path d="M8 .5h5v3H8zM8 4.500h8v3H8zM8 8.500h6v3H8zM8 12.500h7v3H8z" fill="#ee7070" />
        </g>
      </svg>
    </button>
    <div className="ml-[7px] flex h-4 flex-1 items-center border-y border-[#6fa062] bg-[#a3d992]">
      <button
        type="button"
        aria-label="Scroll left"
        className="flex h-4 w-4 items-center justify-center rounded border border-[#6f9c66] bg-[#b8eaa8]"
      >
        <svg viewBox="0 0 4 6" className="h-[6px] w-1">
          <path d="M4 0v6L0 3z" />
        </svg>
      </button>
      <div className="flex-1" />
      <div className="mr-[22px] flex h-[14px] w-2 flex-col justify-center gap-px rounded border border-[#8cc47e] bg-[#c4f0b6]">
        <span className="h-px bg-[#6f9c66]" />
        <span className="h-px bg-[#6f9c66]" />
        <span className="h-px bg-[#6f9c66]" />
        <span className="h-px bg-[#6f9c66]" />
      </div>
      <button
        type="button"
        aria-label="Scroll right"
        className="flex h-4 w-4 items-center justify-center rounded border border-[#6f9c66] bg-[#b8eaa8]"
      >
        <svg viewBox="0 0 4 6" className="h-[6px] w-1">
          <path d="M0 0v6l4-3z" />
        </svg>
      </button>
    </div>
    <div className="ml-[7px] flex items-center gap-[9px]">
      <button type="button" aria-label="Chart settings">
        <svg viewBox="0 0 16 20" className="h-5 w-4">
          <path d="M9.500 2.500h6v14h-6z" fill="#2fb83f" stroke="#116a1c" />
          <path d="M12.500 0v2.500m0 14V20M3 10v10" stroke="#333" />
          <path d="M.5 12.500h6v5h-6z" fill="#ee5c6c" stroke="#7a2a34" />
          <path d={WRENCH} transform="translate(0 3) scale(.95)" fill="#fff" stroke="#111" />
        </svg>
      </button>
      <button type="button" aria-label="Fit scale">
        <svg viewBox="0 0 20 20" className="size-5">
          <path d="m10 10 6 7" stroke="#000" strokeWidth="3" />
          <circle cx="7.500" cy="7.500" r="5.500" fill="#d6d6d6" stroke="#444" />
          <circle cx="6" cy="6" r="2.500" fill="#fff" />
          <path
            d="M17 3v8m-2-6 2-2.500L19 5m-4 4.500 2 2.500 2-2.500M2 16.500h7M3.500 14.500 1 16.500l2.500 2m4-4 2.500 2-2.500 2"
            fill="none"
            stroke="#1028e8"
            strokeWidth="1.400"
          />
        </svg>
      </button>
      <button type="button" aria-label="Zoom out">
        <Magnifier sign="-" />
      </button>
      <button type="button" aria-label="Zoom in">
        <Magnifier sign="+" />
      </button>
    </div>
  </footer>
);

export default function App() {
  return (
    <main className="flex h-screen w-full flex-col overflow-hidden border-l border-[#28c828] bg-white font-['Liberation_Sans',Arial,sans-serif] text-black">
      <TopToolbar />
      <EquityPanel />
      <PositionsPanel />
      <PricePanel />
      <DateAxis />
      <BottomToolbar />
      <div className="h-[3px] shrink-0 border-b border-[#169a16] bg-[#28d028]" />
      <svg viewBox="0 0 1125 2" preserveAspectRatio="none" className="h-[2px] w-full shrink-0 bg-[#e4f4dc]">
        <path
          d="M3 1.500h4M113 1.500h4M136 1.500h40M270 1.500h12M312 1.500h18M380 1.500h34M457 1.500h28M533 1.500h18M580 1.500h18M617 1.500h12M655 1.500h12M690 1.500h12M750 1.500h12M783 1.500h14M826 1.500h24M870 1.500h12M907 1.500h10M953 1.500h16M991 1.500h12M1025 1.500h20"
          stroke="#2a3a2a"
          strokeDasharray="3 2"
        />
      </svg>
    </main>
  );
}
